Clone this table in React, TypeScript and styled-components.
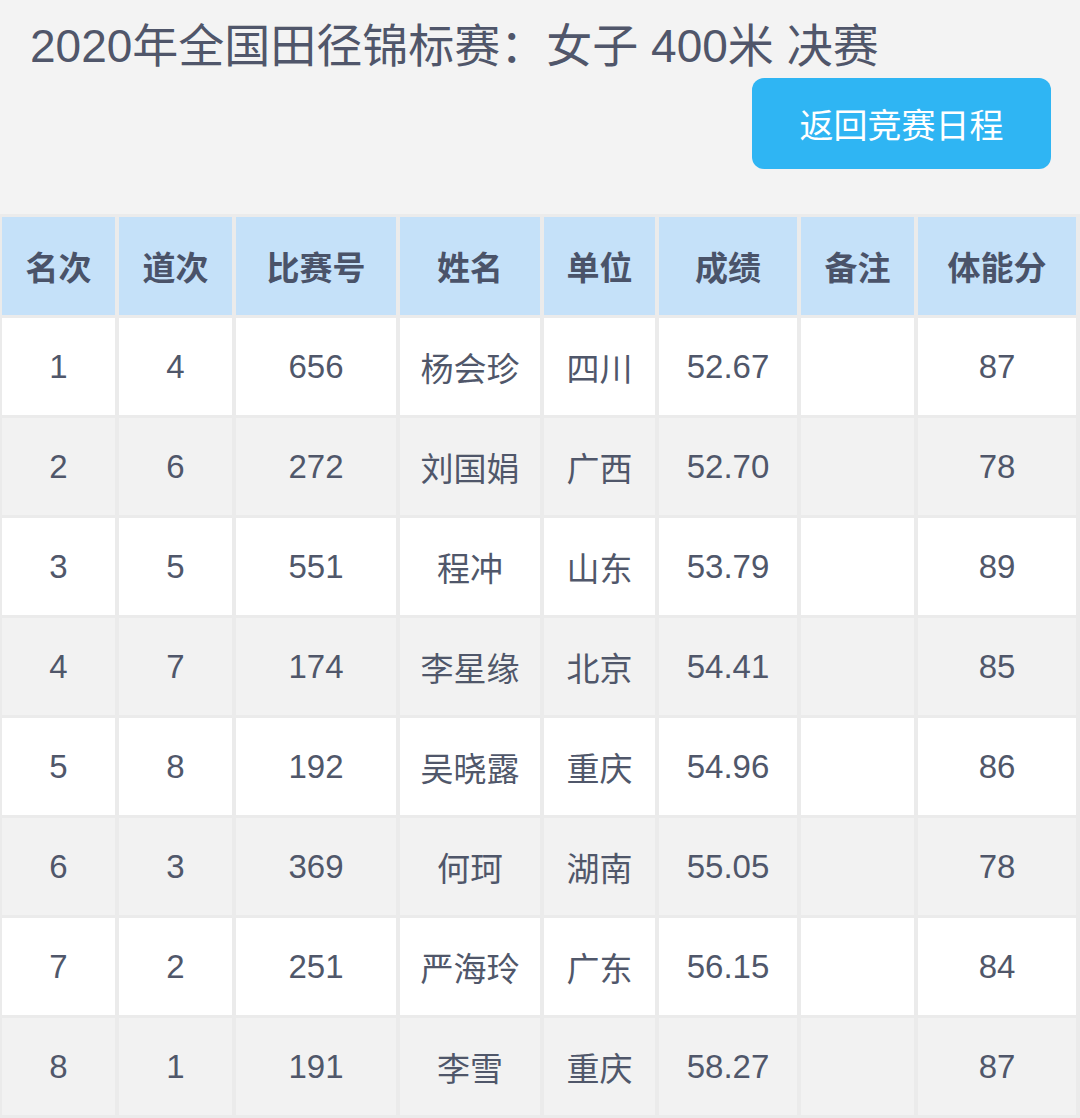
import React from 'react';
import styled, { createGlobalStyle } from 'styled-components';

const GlobalStyle = createGlobalStyle`
  body {
    margin: 0;
    background: #f3f3f3;
    font-family: "Liberation Sans", "Noto Sans CJK SC", sans-serif;
  }
`

const Page = styled.div`
  width: 1080px;
  min-height: 1118px;
  background: #f3f3f3;
  overflow: hidden;
`

const Head = styled.header`
  padding: 15px 29px 0 30px;
  height: 200px;
  box-sizing: border-box;
`

const Title = styled.h1`
  margin: 0;
  font-size: 46px;
  font-weight: 400;
  line-height: 62px;
  color: #50566a;
  white-space: nowrap;
`

const Actions = styled.div`
  display: flex;
  justify-content: flex-end;
  margin-top: 1px;
`

const BackButton = styled.button`
  width: 299px;
  height: 91px;
  border: none;
  border-radius: 12px;
  background: #2fb5f3;
  color: #fff;
  font-family: "Liberation Sans", "Noto Sans CJK SC", sans-serif;
  font-size: 34px;
  cursor: pointer;
`

const Table = styled.table`
  width: 1082px;
  margin: 14px 0 0 -2px;
  table-layout: fixed;
  border-collapse: separate;
  border-spacing: 4px 3px;
  background: #ebebeb;
`

const Th = styled.th`
  height: 98px;
  padding: 0;
  background: #c5e1f9;
  color: #4a5369;
  font-size: 33px;
  font-weight: 700;
  text-align: center;
`

const Row = styled.tr<{ $alt: boolean }>`
  td {
    background: ${p => (p.$alt ? '#f2f2f2' : '#ffffff')};
  }
`

const Td = styled.td`
  height: 97px;
  padding: 0;
  color: #50576a;
  font-size: 33px;
  text-align: center;
`

const widths = [113, 113, 160, 140, 111, 138, 113, 158];
const headers = ['名次', '道次', '比赛号', '姓名', '单位', '成绩', '备注', '体能分'];

const results = [
  ['1', '4', '656', '杨会珍', '四川', '52.67', '', '87'],
  ['2', '6', '272', '刘国娟', '广西', '52.70', '', '78'],
  ['3', '5', '551', '程冲', '山东', '53.79', '', '89'],
  ['4', '7', '174', '李星缘', '北京', '54.41', '', '85'],
  ['5', '8', '192', '吴晓露', '重庆', '54.96', '', '86'],
  ['6', '3', '369', '何珂', '湖南', '55.05', '', '78'],
  ['7', '2', '251', '严海玲', '广东', '56.15', '', '84'],
  ['8', '1', '191', '李雪', '重庆', '58.27', '', '87'],
];

const App: React.FC = () => {
  return (
    <Page>
      <GlobalStyle />
      <Head>
        <Title>2020年全国田径锦标赛：女子 400米 决赛</Title>
        <Actions>
          <BackButton>返回竞赛日程</BackButton>
        </Actions>
      </Head>
      <Table>
        <colgroup>
          {widths.map((w, i) => <col key={i} style={{ width: w }} />)}
        </colgroup>
        <thead>
          <tr>
            {headers.map(h => <Th key={h}>{h}</Th>)}
          </tr>
        </thead>
        <tbody>
          {results.map((r, i) => (
            <Row key={i} $alt={i % 2 === 1}>
              {r.map((c, j) => <Td key={j}>{c}</Td>)}
            </Row>
          ))}
        </tbody>
      </Table>
    </Page>
  );
};

export default App;
